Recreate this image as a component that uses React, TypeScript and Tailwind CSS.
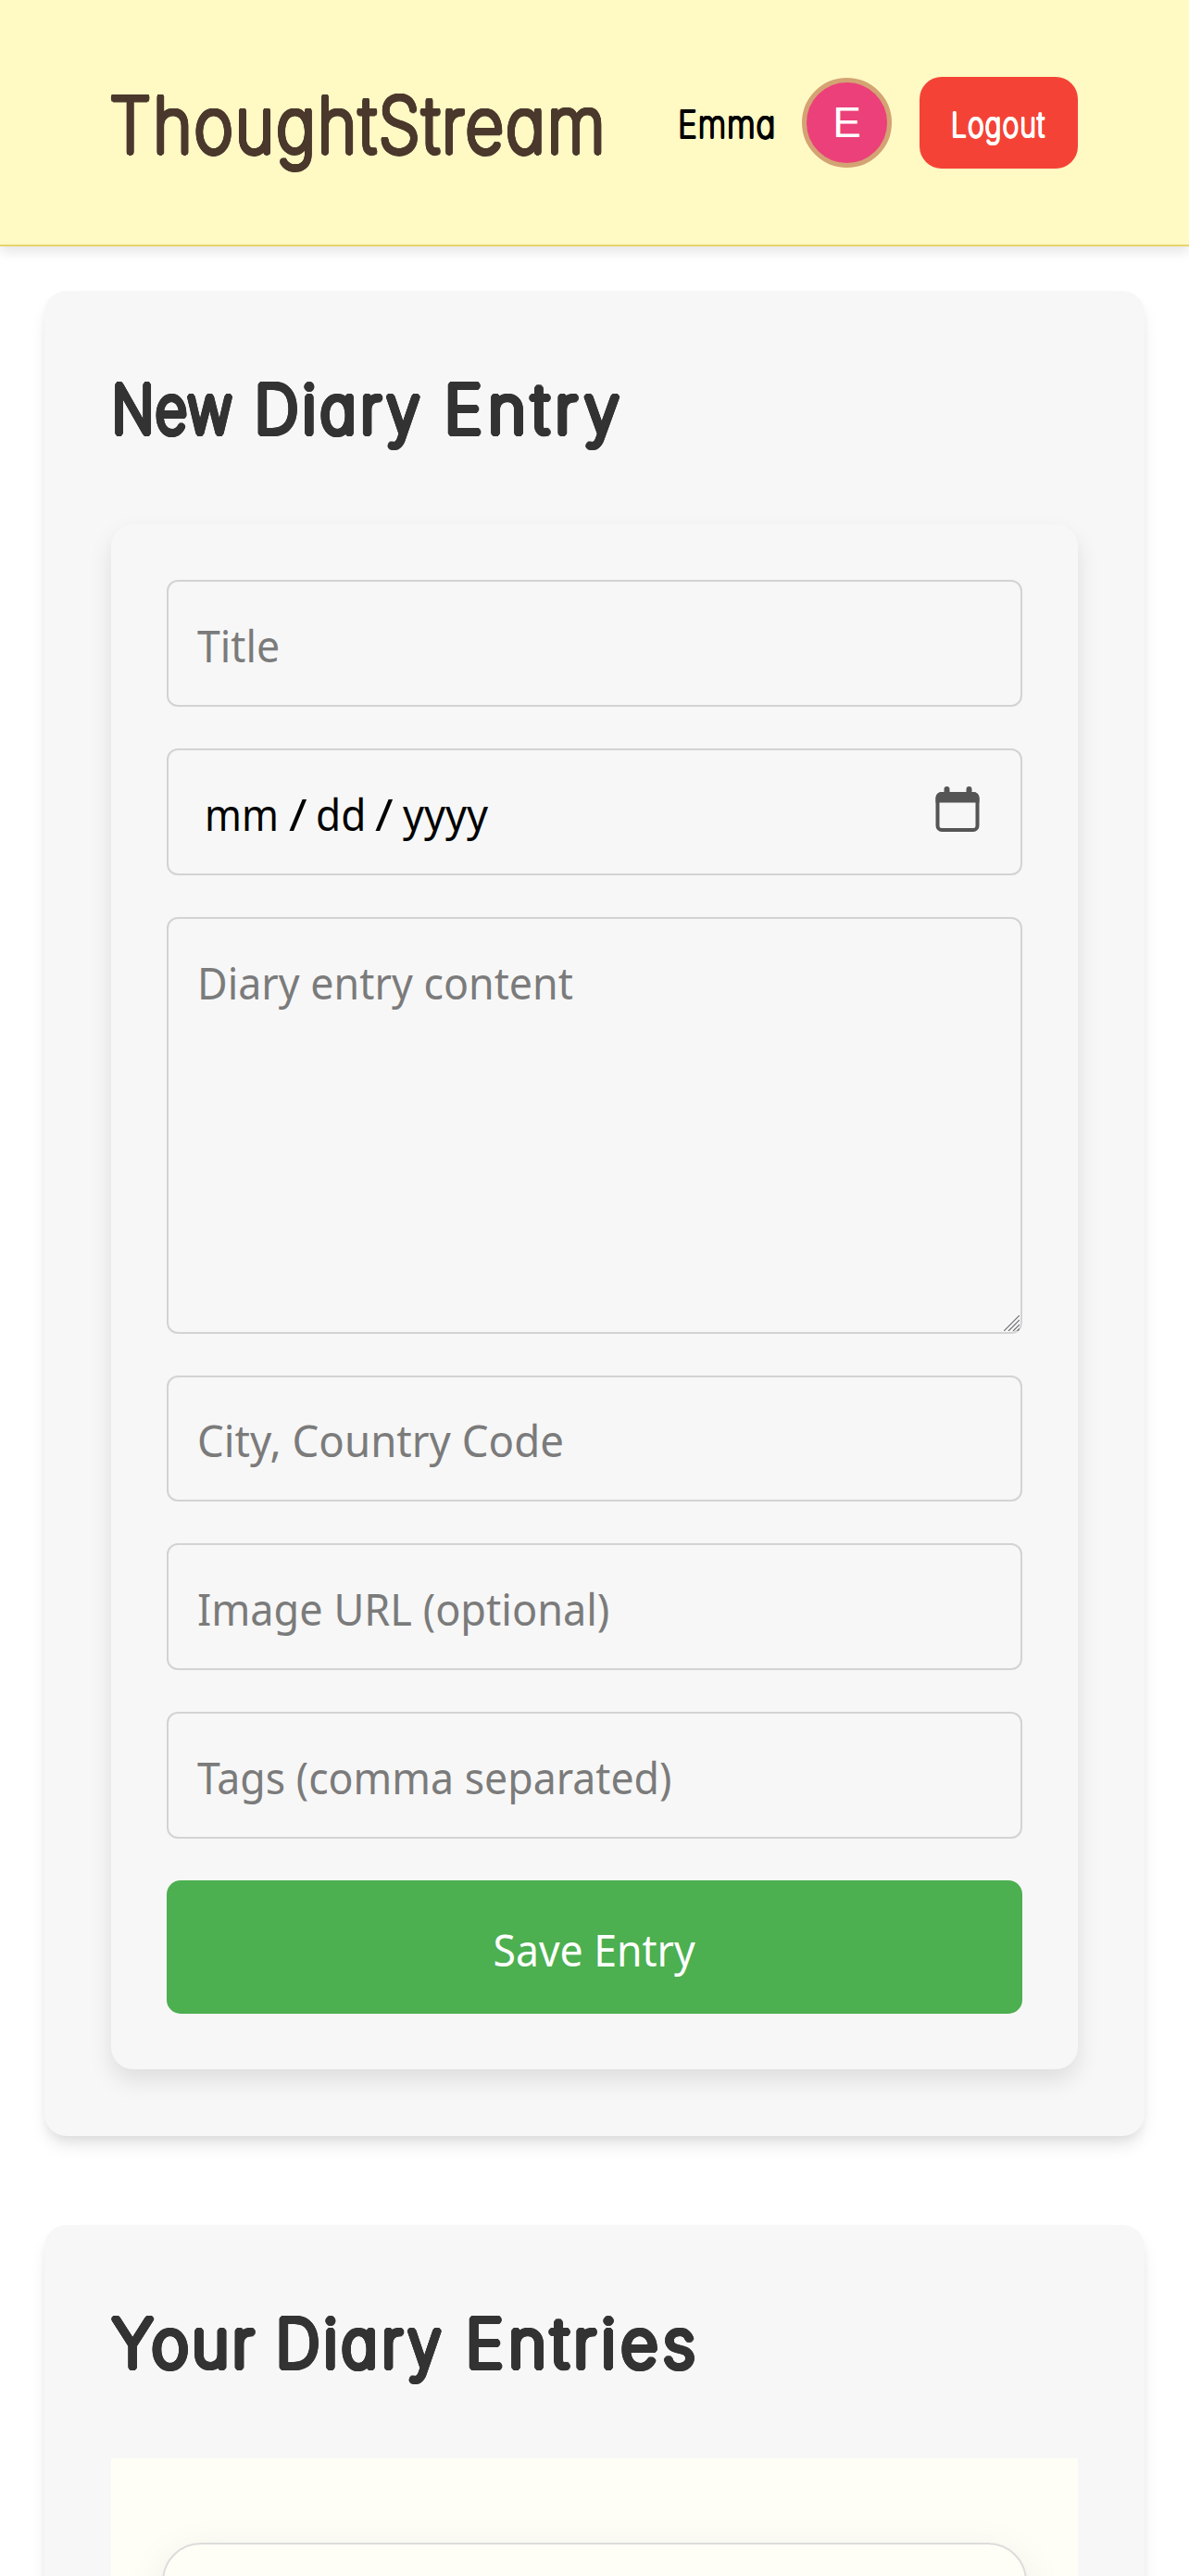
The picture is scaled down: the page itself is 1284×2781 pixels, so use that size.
import React from "react";

// Thin letterforms thickened by a ring of shadows, which gives round pen-like strokes.
const hand =
  "font-['Inter'] [font-feature-settings:'cv11','ss02'] inline-block origin-left whitespace-nowrap leading-none";
const penTitle =
  "font-extralight [text-shadow:2.6px_0_0_currentColor,-2.6px_0_0_currentColor,0_2.5px_0_currentColor,0_-2.5px_0_currentColor,1.9px_1.8px_0_currentColor,-1.9px_1.8px_0_currentColor,1.9px_-1.8px_0_currentColor,-1.9px_-1.8px_0_currentColor,2.4px_1px_0_currentColor,-2.4px_1px_0_currentColor,2.4px_-1px_0_currentColor,-2.4px_-1px_0_currentColor,1.1px_2.3px_0_currentColor,-1.1px_2.3px_0_currentColor,1.1px_-2.3px_0_currentColor,-1.1px_-2.3px_0_currentColor,1.4px_0_0_currentColor,-1.4px_0_0_currentColor]";
const penHeading =
  "font-extralight [text-shadow:3.6px_0_0_currentColor,-3.6px_0_0_currentColor,0_3.3px_0_currentColor,0_-3.3px_0_currentColor,2.6px_2.3px_0_currentColor,-2.6px_2.3px_0_currentColor,2.6px_-2.3px_0_currentColor,-2.6px_-2.3px_0_currentColor,3.3px_1.3px_0_currentColor,-3.3px_1.3px_0_currentColor,3.3px_-1.3px_0_currentColor,-3.3px_-1.3px_0_currentColor,1.5px_3px_0_currentColor,-1.5px_3px_0_currentColor,1.5px_-3px_0_currentColor,-1.5px_-3px_0_currentColor,1.9px_0_0_currentColor,-1.9px_0_0_currentColor]";
const penSmall =
  "font-extralight [text-shadow:1.1px_0_0_currentColor,-1.1px_0_0_currentColor,0_1px_0_currentColor,0_-1px_0_currentColor,0.8px_0.7px_0_currentColor,-0.8px_0.7px_0_currentColor,0.8px_-0.7px_0_currentColor,-0.8px_-0.7px_0_currentColor]";

const word = `${hand} ${penHeading}`;

const control =
  "block w-full origin-left bg-transparent text-[48px] text-black outline-none placeholder:text-[#7b7b7b] placeholder:opacity-100";

const sectionShadow =
  "shadow-[0_12px_18px_-3px_rgba(0,0,0,0.1),0_6px_12px_-3px_rgba(0,0,0,0.06)]";

function Field({ placeholder, scale }: { placeholder: string; scale: string }) {
  return (
    <div className="h-[136.8px] w-full rounded-[12px] border-2 border-[#d3d3d3] px-[31px]">
      <input className={`${control} h-full pt-[4px] ${scale}`} placeholder={placeholder} />
    </div>
  );
}

function CalendarIcon() {
  return (
    <svg className="mb-[5px]" width="48" height="49" viewBox="0 0 48 49" fill="none">
      <rect x="2.5" y="8" width="43" height="39" rx="4.5" stroke="#555" strokeWidth="4" />
      <path d="M.5 17.5V12a6 6 0 0 1 6-6h35a6 6 0 0 1 6 6v5.5z" fill="#555" />
      <path d="M12.500 3v6M36.500 3v6" stroke="#555" strokeWidth="6" strokeLinecap="round" />
    </svg>
  );
}

function ResizeGrip() {
  return (
    <svg
      className="pointer-events-none absolute right-px bottom-px"
      width="17"
      height="17"
      viewBox="0 0 17 17"
      stroke="#6f6f74"
      strokeWidth="1.2"
    >
      <path d="M0 17 17 0M5 17 17 5M10 17 17 10M14.5 17 17 14.5" />
    </svg>
  );
}

function Header() {
  return (
    <header className="flex h-[266px] shrink-0 justify-between border-b-2 border-[#e6d56b] bg-[#fff9c4] pr-[120px] pl-[118px] shadow-[0_6px_12px_rgba(0,0,0,0.1)]">
      <h1 className="w-[560px] pt-[91px] text-[84px] leading-none text-[#4b382c]">
        <span className={`${hand} ${penTitle} tracking-[2.3px] scale-x-[0.86]`}>ThoughtStream</span>
      </h1>
      <div className="flex h-[264px] items-center">
        <span className="mr-[29px] w-[105px] pt-[3px] text-[41px] leading-none text-black">
          <span className={`${hand} ${penSmall} tracking-[0.9px] scale-x-[0.86]`}>Emma</span>
        </span>
        <span className="mr-[30px] flex size-[97px] items-center justify-center rounded-full border-[5px] border-[#d4a373] bg-[#ec407a] font-['Liberation_Sans'] text-[46px] leading-none text-white">
          E
        </span>
        <button className="flex h-[99px] w-[171px] items-center rounded-[24px] bg-[#f44336] pt-[4px] pl-[34px] text-[37px] text-white">
          <span className={`${hand} ${penSmall} tracking-[1.4px] scale-x-[0.81]`}>Logout</span>
        </button>
      </div>
    </header>
  );
}

export default function App() {
  return (
    <div className="flex h-[2781px] w-[1284px] flex-col overflow-hidden bg-white font-['Noto_Sans',sans-serif]">
      <Header />
      <main className="flex flex-col gap-[96px] px-[48px] pt-[48px]">
        <section className={`h-[1992px] rounded-[24px] bg-[#f7f7f7] px-[72px] ${sectionShadow}`}>
          <h2 className="flex h-[252px] pt-[89px] pl-px text-[73px] leading-none text-[#333]">
            <span className="w-[154px]">
              <span className={`${word} tracking-[2px] scale-x-[0.81]`}>New</span>
            </span>{" "}
            <span className="w-[205px]">
              <span className={`${word} tracking-[5px] scale-x-[0.9]`}>Diary</span>
            </span>{" "}
            <span className="w-[200px]">
              <span className={`${word} tracking-[7px] scale-x-[0.945]`}>Entry</span>
            </span>
          </h2>
          <form className="flex h-[1668px] flex-col gap-[45px] rounded-[24px] bg-[#f7f7f7] p-[60px] shadow-[0_12px_24px_rgba(0,0,0,0.1)]">
            <Field placeholder="Title" scale="scale-x-[0.93]" />
            <div className="flex h-[136.8px] items-center justify-between rounded-[12px] border-2 border-[#d3d3d3] pr-[44px] pl-[39px] text-[48px] text-black">
              <span className="flex pt-[6px]">
                <span className="w-[91px] origin-left scale-x-[0.89]">mm</span>
                <span className="w-[29px] origin-left scale-x-[1.1]">/</span>
                <span className="w-[64px] origin-left scale-x-[0.92]">dd</span>
                <span className="w-[30px] origin-left scale-x-[1.1]">/</span>
                <span className="w-[95px] origin-left scale-x-[0.94]">yyyy</span>
              </span>
              <CalendarIcon />
            </div>
            <div className="relative h-[450px] rounded-[12px] border-2 border-[#d3d3d3] px-[31px]">
              <textarea
                className={`${control} h-full resize-none pt-[33px] scale-x-[0.933]`}
                placeholder="Diary entry content"
              />
              <ResizeGrip />
            </div>
            <Field placeholder="City, Country Code" scale="scale-x-[0.95]" />
            <Field placeholder="Image URL (optional)" scale="scale-x-[0.938]" />
            <Field placeholder="Tags (comma separated)" scale="scale-x-[0.93]" />
            <button
              type="button"
              className="h-[144px] w-full rounded-[15px] bg-[#4caf50] pt-[6px] text-[48px] leading-none text-white"
            >
              <span className="inline-block scale-x-[0.928]">Save Entry</span>
            </button>
          </form>
        </section>
        <section className={`h-[900px] rounded-[24px] bg-[#f7f7f7] px-[72px] ${sectionShadow}`}>
          <h2 className="flex h-[252px] pt-[89px] pl-px text-[73px] leading-none text-[#333]">
            <span className="w-[177px]">
              <span className={`${word} tracking-[4px] scale-x-[0.93]`}>Your</span>
            </span>{" "}
            <span className="w-[205px]">
              <span className={`${word} tracking-[5px] scale-x-[0.9]`}>Diary</span>
            </span>{" "}
            <span className="w-[260px]">
              <span className={`${word} tracking-[6px] scale-x-[0.945]`}>Entries</span>
            </span>
          </h2>
          <div className="h-[600px] bg-[#fffef6] px-[55px] pt-[91px]">
            <article className="h-[480px] rounded-[42px] border-2 border-[#dcdcdc] bg-[#fffef6] shadow-[0_12px_45px_rgba(0,0,0,0.08)]" />
          </div>
        </section>
      </main>
    </div>
  );
}
